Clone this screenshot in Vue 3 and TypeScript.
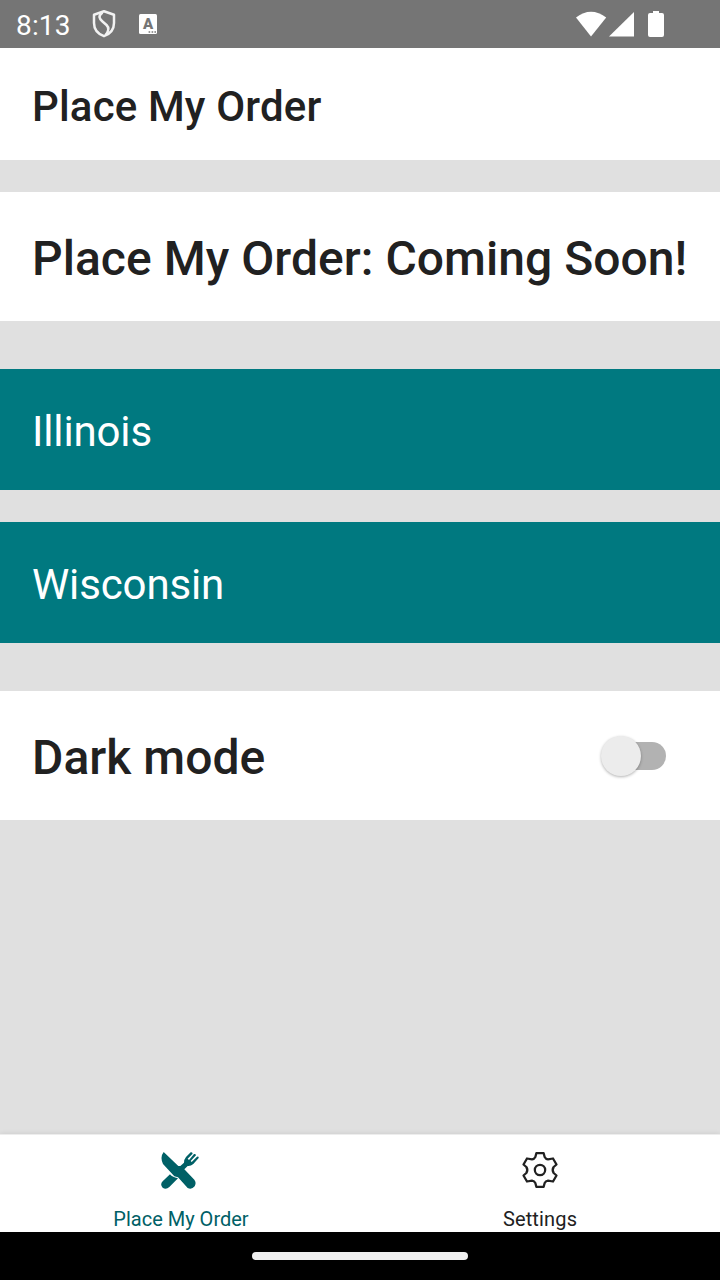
<script setup lang="ts">
import { ref } from 'vue'

const states: string[] = ['Illinois', 'Wisconsin']
const darkMode = ref(false)
</script>

<template>
  <div class="screen">
    <div class="status">
      <span class="clock">8:13</span>
      <svg class="shield" width="24" height="30" viewBox="0 0 24 30" fill="none" stroke="#f2f2f2" stroke-width="2.5" stroke-linejoin="round">
        <path d="M12 2.2 L22 5.8 V14 C22 20.5 18.5 24.8 12 27.2 C5.500 24.800 2 20.500 2 14 V5.800 Z" />
        <path d="M10.500 3.500 C6 7 7 9.500 10.500 12.500 L14.500 16 C17.500 19 17 22 13.500 26" />
      </svg>
      <svg class="letter" width="18" height="20" viewBox="0 0 18 20">
        <rect width="18" height="20" rx="1.5" fill="#fff" />
        <text x="9" y="14.800" text-anchor="middle">A</text>
        <path d="M9.600 18h1.600M12.600 18h1.600M15.400 18h1.600" stroke="#757575" stroke-width="1.600" />
      </svg>
      <svg class="signals" width="90" height="28" viewBox="0 0 90 28" fill="#fff">
        <path d="M0 6.400 Q15 -5 30.200 6.400 L15 25.500 Z" />
        <path d="M58 1 V25.600 H33 Z" />
        <path d="M77 0 H83 V2 H86 Q88 2 88 4 V24 Q88 26 86 26 H74 Q72 26 72 24 V4 Q72 2 74 2 H77 Z" />
      </svg>
    </div>
    <header class="header">Place My Order</header>
    <main class="content">
      <section class="card">Place My Order: Coming Soon!</section>
      <div class="states">
        <div v-for="state in states" :key="state" class="state">{{ state }}</div>
      </div>
      <section class="card">
        <span>Dark mode</span>
        <span class="switch" :class="{ on: darkMode }" role="switch" :aria-checked="darkMode" @click="darkMode = !darkMode">
          <span class="thumb"></span>
        </span>
      </section>
    </main>
    <nav class="tabs">
      <div class="tab active">
        <svg width="40" height="40" viewBox="30 30 120 120" fill="currentColor">
          <path d="M41 36 L85 78 L91 78 L102 68 Q102 58 108 51 L122 37 Q127 36 128 41 L113 56 L117 60 L132 42 Q137 41 138 46 L122 63 L125 66 L141 50 Q147 49 146 54 L130 72 Q122 79 113 78 L103 88 L133 119 Q140 128 134 139 Q125 150 113 144 L84 112 L73 109 L39 72 Q29 51 41 36 Z" />
          <path d="M60 103 Q65 111 84 115 L58 141 Q48 150 38 143 Q29 133 38 124 Z" />
        </svg>
        <span>Place My Order</span>
      </div>
      <div class="tab settings">
        <svg width="40" height="40" viewBox="30 30 120 120" fill="none" stroke="currentColor" stroke-width="6.800" stroke-linejoin="round">
          <path d="M79 39.500 H101 L104 51 Q107 57 114 58 L129 55.500 L139.500 73.500 L131 81 Q125 90 131 99 L139.500 106.500 L129 124.500 L114 122 Q107 123 104 129 L101 140.500 H79 L76 129 Q73 123 66 122 L51 124.500 L40.500 106.500 L49 99 Q55 90 49 81 L40.500 73.500 L51 55.500 L66 58 Q73 57 76 51 Z" />
          <circle cx="90" cy="90" r="15.500" />
        </svg>
        <span>Settings</span>
      </div>
    </nav>
    <div class="gesture"><span class="pill"></span></div>
  </div>
</template>

<style>
body {
  margin: 0;
}
</style>

<style scoped>
.screen {
  width: 720px;
  height: 1280px;
  display: flex;
  flex-direction: column;
  overflow: hidden;
  background: #e0e0e0;
  color: #212121;
  font-family: Roboto, sans-serif;
}
.status {
  height: 48px;
  flex: none;
  box-sizing: border-box;
  padding: 0 54px 0 16px;
  display: flex;
  align-items: center;
  background: #757575;
  color: #fff;
}
.clock {
  width: 76px;
  font-size: 28px;
  line-height: 48px;
  letter-spacing: 0.15px;
  padding-top: 4px;
}
.letter {
  margin-left: 23px;
}
.letter text {
  font: 900 15px Roboto, sans-serif;
  fill: #757575;
}
.signals {
  margin-left: auto;
  padding-top: 2px;
}
.header {
  height: 112px;
  flex: none;
  box-sizing: border-box;
  padding: 4px 32px 0;
  display: flex;
  align-items: center;
  background: #fff;
  font-size: 42px;
  font-weight: 500;
  letter-spacing: 0.16px;
}
.content {
  flex: 1;
  padding-top: 32px;
  display: flex;
  flex-direction: column;
  gap: 48px;
}
.card {
  height: 129px;
  box-sizing: border-box;
  padding: 3px 32px 0;
  display: flex;
  align-items: center;
  justify-content: space-between;
  background: #fff;
  font-size: 48px;
  font-weight: 500;
  letter-spacing: 0.04px;
  white-space: nowrap;
}
.states {
  display: flex;
  flex-direction: column;
  gap: 32px;
}
.state {
  height: 121px;
  box-sizing: border-box;
  padding: 4px 32px 0;
  display: flex;
  align-items: center;
  background: #007980;
  color: #fff;
  font-size: 42px;
  letter-spacing: -0.14px;
}
.switch {
  width: 60px;
  height: 28px;
  margin: 0 22px 3px 0;
  border-radius: 14px;
  background: #b2b2b2;
  display: flex;
  align-items: center;
}
.thumb {
  width: 40px;
  height: 40px;
  flex: none;
  margin-left: -5px;
  border-radius: 50%;
  background: #ececec;
  box-shadow: 0 1px 3px rgba(0, 0, 0, 0.3);
}
.switch.on {
  justify-content: flex-end;
  background: #80bcc0;
}
.switch.on .thumb {
  margin-right: -5px;
  background: #007980;
}
.tabs {
  height: 98px;
  flex: none;
  box-sizing: border-box;
  padding-top: 15px;
  display: flex;
  background: #fff;
  border-top: 1px solid #ededed;
  box-shadow: 0 0 5px rgba(0, 0, 0, 0.1);
}
.tab {
  flex: 1;
  display: flex;
  flex-direction: column;
  align-items: center;
  gap: 17px;
  font-size: 20px;
  line-height: 24px;
}
.tab.active {
  color: #006066;
}
.tab.active span {
  padding-left: 2px;
}
.tab.settings span {
  letter-spacing: 0.15px;
}
.gesture {
  position: relative;
  height: 48px;
  flex: none;
  display: flex;
  align-items: center;
  justify-content: center;
  background: #000;
}
.pill {
  width: 216px;
  height: 8px;
  border-radius: 4px;
  background: #f0f0f0;
}
</style>
